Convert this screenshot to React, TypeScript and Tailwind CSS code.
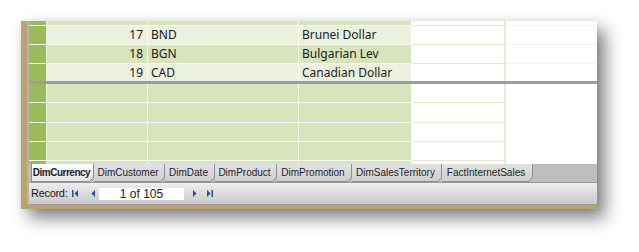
import React from 'react'

const font = { fontFamily: '"Noto Sans", "Open Sans", sans-serif' }
const uiFont = { fontFamily: '"Liberation Sans", Arial, sans-serif' }

interface Row {
  id?: number
  code?: string
  name?: string
  h: string
  tone: 'light' | 'dark'
  line: boolean
}

const dataRows: Row[] = [
  { h: 'h-[4px]', tone: 'dark', line: true },
  { id: 17, code: 'BND', name: 'Brunei Dollar', h: 'h-[18px]', tone: 'light', line: true },
  { id: 18, code: 'BGN', name: 'Bulgarian Lev', h: 'h-[18px]', tone: 'dark', line: true },
  { id: 19, code: 'CAD', name: 'Canadian Dollar', h: 'h-[17px]', tone: 'light', line: false },
]

const emptyRows = ['h-[18px]', 'h-[19px]', 'h-[18px]', 'h-[18px]', 'h-[3px]']

const tabs = [
  { label: 'DimCurrency', w: 'w-[63px]', active: true },
  { label: 'DimCustomer', w: 'w-[71px]' },
  { label: 'DimDate', w: 'w-[50px]' },
  { label: 'DimProduct', w: 'w-[62px]' },
  { label: 'DimPromotion', w: 'w-[75px]' },
  { label: 'DimSalesTerritory', w: 'w-[90px]' },
  { label: 'FactInternetSales', w: 'w-[91px]' },
]

// widths below are content widths; borders are added on top (box-content)
function DataRow({ row }: { row: Row }) {
  const bg = row.tone === 'light' ? 'bg-[#ebf1de]' : 'bg-[#d8e4bc]'
  const g = row.line ? 'border-b border-b-[#f6f9ef]' : ''
  const w = row.line ? 'border-b border-b-[#e3ebcf]' : ''
  const f = row.line ? 'border-b border-b-[#f3f6ec]' : ''
  return (
    <div className="flex text-[12px] text-[#1a1a1a] leading-none">
      <div className={`${row.h} box-content w-[17px] bg-[#9bbb59] border-r border-r-[#f6f9ef] ${g}`} />
      <div className={`${row.h} box-content w-[96px] ${bg} border-r border-r-[#f6f9ef] ${g} flex items-center justify-end pr-[4px]`}>
        {row.id}
      </div>
      <div className={`${row.h} box-content w-[147px] ${bg} border-r border-r-[#f6f9ef] ${g} flex items-center pl-[3px]`}>
        {row.code}
      </div>
      <div className={`${row.h} box-content w-[109px] ${bg} ${g} flex items-center pl-[3px]`}>{row.name}</div>
      <div className={`${row.h} box-content w-[93px] bg-white border-r-2 border-r-[#e6edd5] ${w}`} />
      <div className={`${row.h} box-content w-[91px] bg-white ${f}`} />
    </div>
  )
}

function EmptyRow({ h, last }: { h: string; last: boolean }) {
  const g = last ? '' : 'border-b border-b-[#f6f9ef]'
  const w = last ? '' : 'border-b border-b-[#e3ebcf]'
  return (
    <div className="flex">
      <div className={`${h} box-content w-[17px] bg-[#9bbb59] border-r border-r-[#f6f9ef] ${g}`} />
      <div className={`${h} box-content w-[100px] bg-[#d8e4bc] border-r border-r-[#f6f9ef] ${g}`} />
      <div className={`${h} box-content w-[150px] bg-[#d8e4bc] border-r border-r-[#f6f9ef] ${g}`} />
      <div className={`${h} box-content w-[112px] bg-[#d8e4bc] ${g}`} />
      <div className={`${h} box-content w-[93px] bg-white border-r-2 border-r-[#e6edd5] ${w}`} />
      <div className={`${h} box-content w-[91px] bg-white ${last ? '' : 'border-b border-b-white'}`} />
    </div>
  )
}

function NavIcon({ dir, bar }: { dir: 'l' | 'r'; bar?: boolean }) {
  return (
    <svg width="7" height="7" viewBox="0 0 7 7" className="fill-[#1f4f9c]">
      {dir === 'l' ? (
        <>
          {bar && <rect x="0" y="0" width="1.5" height="7" />}
          <polygon points="6,0 6,7 2.5,3.5" />
        </>
      ) : (
        <>
          <polygon points="1,0 1,7 4.5,3.5" />
          {bar && <rect x="5.5" y="0" width="1.5" height="7" />}
        </>
      )}
    </svg>
  )
}

export default function App() {
  return (
    <div className="w-[639px] h-[252px] bg-white pt-[21px] pl-[21px]" style={font}>
      <div className="w-[576px] h-[188px] flex flex-col border-l-[6px] border-b-[4px] border-[#bba46b] shadow-[8px_9px_16px_rgba(0,0,0,0.5),0_0_6px_rgba(0,0,0,0.08)]">
        <div className="flex-1 flex flex-col border-l-2 border-[#b4b4b4] bg-[#bdbdbd]">
          {/* datasheet */}
          <div className="h-[143px] flex flex-col overflow-hidden">
            {dataRows.map((r, i) => (
              <DataRow key={i} row={r} />
            ))}
            <div className="h-[1px] box-content border-t-[3px] border-[#9d9d9d] bg-[#e9e9e9]" />
            {emptyRows.map((h, i) => (
              <EmptyRow key={i} h={h} last={i === emptyRows.length - 1} />
            ))}
          </div>

          {/* sheet tabs */}
          <div className="h-[18px] flex pl-[2px] bg-[#bebebe] text-[10px] text-[#1e1e1e] leading-none" style={uiFont}>
            {tabs.map((t) => (
              <div
                key={t.label}
                className={`${t.w} relative flex items-center justify-center pr-[2px] border-r border-b border-[#8e8e8e] ${
                  t.active
                    ? 'bg-gradient-to-b from-[#ffffff] to-[#e6e6e6] font-bold border-l tracking-[-0.5px]'
                    : 'bg-gradient-to-b from-[#e2e2e2] to-[#cfcfcf]'
                }`}
              >
                {t.label}
                <svg width="5" height="5" viewBox="0 0 5 5" className="absolute right-[-1px] bottom-[-1px]">
                  <polygon points="5,0 5,5 0,5" fill="#bebebe" />
                  <line x1="5" y1="0" x2="0" y2="5" stroke="#8e8e8e" strokeWidth="1" />
                </svg>
              </div>
            ))}
          </div>

          {/* record navigator */}
          <div
            className="h-[23px] flex items-center border-t border-[#9a9a9a] border-b border-b-[#9a9a9a] bg-gradient-to-b from-[#eeeeee] to-[#c9c9c9] pl-[2px] text-[11px] text-[#1a1a1a] leading-none"
            style={uiFont}
          >
            <span className="w-[41px] tracking-[-0.3px]">Record:</span>
            <span className="w-[17px] flex"><NavIcon dir="l" bar /></span>
            <span className="w-[10px] flex"><NavIcon dir="l" /></span>
            <div className="w-[85px] h-[12px] bg-white flex items-center justify-center text-[12px]">1 of 105</div>
            <span className="ml-[8px] w-[14px] flex"><NavIcon dir="r" /></span>
            <span className="flex"><NavIcon dir="r" bar /></span>
          </div>
        </div>
      </div>
    </div>
  )
}
